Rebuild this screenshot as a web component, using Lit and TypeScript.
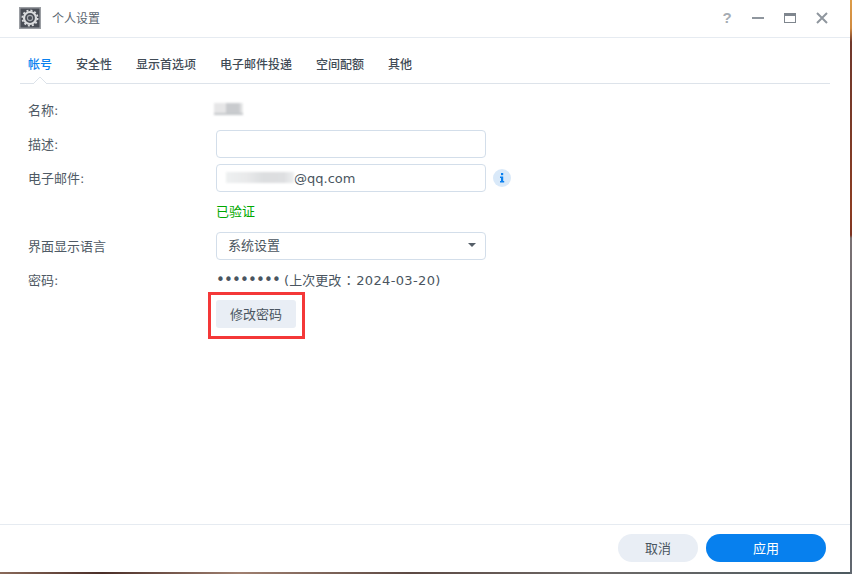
import { LitElement, html, css } from "lit";
import { customElement } from "lit/decorators.js";

@customElement("app-root")
export class AppRoot extends LitElement {
  static styles = css`
    :host {
      display: block;
      width: 852px;
      height: 574px;
      font-family: "DejaVu Sans", "Noto Sans CJK SC", sans-serif;
      font-size: 13px;
      color: #4a5560;
    }
    .desk {
      width: 852px;
      height: 574px;
      box-sizing: border-box;
      padding: 0 2px 2px 0;
      background:
        linear-gradient(180deg, #dd9c48 0, #d08a40 28px, #70382c 42px, #7a3a28 120px, #8c3c22 210px, #7d3422 235px, #7b7274 238px, #6a6a70 330px, #565d66 470px, #626870 574px) right top / 2px 574px no-repeat,
        linear-gradient(90deg, #8a6a5a, #4a2e28 12%, #a08070 28%, #5d4a44 48%, #6e6a68 70%, #4c5a60 100%) left bottom / 852px 2px no-repeat;
      overflow: hidden;
    }
    .win {
      height: 572px;
      background: #fff;
      display: flex;
      flex-direction: column;
      border-bottom-right-radius: 2px;
    }
    .head {
      height: 36px;
      border-bottom: 1px solid #e6ebf1;
      display: flex;
      align-items: center;
      padding: 0 20px 1px 19px;
      flex: none;
    }
    .app {
      width: 22px;
      height: 22px;
      display: block;
      flex: none;
    }
    .title {
      margin: 0 0 2px 11px;
      font-size: 12px;
      color: #5a6570;
      flex: 1;
    }
    .ctl {
      display: flex;
      align-items: center;
      gap: 16px;
    }
    .ctl svg {
      display: block;
      width: 16px;
      height: 16px;
    }
    .tabs {
      margin: 0 20px;
      height: 46px;
      box-sizing: border-box;
      border-bottom: 1px solid #dde3ea;
      display: flex;
      align-items: center;
      gap: 24px;
      padding: 6px 8px 1px;
      position: relative;
      font-size: 12px;
      font-weight: 500;
      color: #414b55;
      flex: none;
    }
    .tab.on {
      color: #0a80ef;
    }
    .notch {
      position: absolute;
      left: 13px;
      bottom: -1px;
      width: 14px;
      height: 8px;
      display: block;
    }
    .body {
      flex: 1;
      padding: 9px 28px 0;
    }
    .row {
      height: 34px;
      display: grid;
      grid-template-columns: 188px 1fr;
      align-items: center;
    }
    .lab {
      font-size: 13px;
      color: #4f5a65;
      padding-bottom: 2px;
    }
    .val {
      display: flex;
      align-items: center;
      gap: 7px;
      min-width: 0;
    }
    .input {
      width: 270px;
      height: 28px;
      box-sizing: border-box;
      border: 1px solid #d3deea;
      border-radius: 4px;
      background: #fff;
      display: flex;
      align-items: center;
      padding: 0 9px;
      position: relative;
    }
    .blur {
      filter: blur(1px);
    }
    .blur.email {
      width: 68px;
      height: 11px;
      margin-top: -1px;
      background: linear-gradient(90deg, #eef0f1, #e9eaeb 30%, #dcdee0 55%, #dedfe1 85%, #eef0f1);
    }
    .blur.name {
      width: 29px;
      height: 10px;
      margin: -4px 0 0 -2px;
      background: linear-gradient(90deg, #e6e6e7 0 42%, #c9cbce 42% 85%, #f0f0f0);
      box-shadow: 0 2px 0 #c4c7ca;
    }
    .info {
      width: 18px;
      height: 18px;
      display: block;
    }
    .ok {
      color: #00a800;
      font-size: 13px;
      padding-bottom: 3px;
    }
    .caret {
      position: absolute;
      right: 9px;
      top: 10px;
      width: 0;
      height: 0;
      border-left: 4.5px solid transparent;
      border-right: 4.5px solid transparent;
      border-top: 4.5px solid #555e68;
    }
    .sel {
      padding: 0 0 4px 11px;
      font-size: 13px;
    }
    .pw {
      padding-bottom: 1px;
    }
    .dots {
      font-size: 15px;
      line-height: 1;
      letter-spacing: -0.85px;
    }
    .date {
      letter-spacing: 0.35px;
    }
    .colon {
      font-family: "Noto Sans CJK TC", sans-serif;
      padding: 0 1px;
    }
    .btn {
      border: 0;
      padding: 0 0 2px;
      font: inherit;
      height: 28px;
      box-sizing: border-box;
      background: #e9eef5;
      color: #4a5560;
      display: flex;
      align-items: center;
      justify-content: center;
      font-size: 13px;
    }
    .change {
      width: 80px;
      border-radius: 3px;
      position: relative;
    }
    .change::after {
      content: "";
      position: absolute;
      left: -8px;
      top: -8px;
      width: 97px;
      height: 47px;
      box-sizing: border-box;
      border: 3px solid #f43838;
    }
    .foot {
      height: 48px;
      box-sizing: border-box;
      border-top: 1px solid #e6ebf1;
      display: flex;
      justify-content: flex-end;
      align-items: center;
      gap: 8px;
      padding: 0 24px 1px 0;
      flex: none;
    }
    .pill {
      border-radius: 14px;
    }
    .cancel {
      width: 80px;
    }
    .apply {
      width: 120px;
      background: #0780ee;
      color: #fff;
    }
  `;

  render() {
    return html`
      <div class="desk">
        <div class="win">
          <div class="head">
            <svg class="app" viewBox="0 0 22 22">
              <rect x="0" y="0" width="22" height="22" fill="#9a9da2" />
              <rect x="1.5" y="1.5" width="19" height="19" fill="#4a4e56" />
              <g fill="none" stroke="#dcdddf">
                <circle cx="11" cy="11" r="6" stroke-width="2.2" />
                <circle cx="11" cy="11" r="7.6" stroke-width="1.8" stroke-dasharray="2 2" />
                <circle cx="11" cy="11" r="2.6" stroke-width="1.1" stroke="#a8abb0" />
              </g>
            </svg>
            <div class="title">个人设置</div>
            <div class="ctl">
              <svg viewBox="0 0 16 16"><text x="4.5" y="13" font-size="15" font-weight="700" font-family="Liberation Sans" fill="#a6acb3">?</text></svg>
              <svg viewBox="0 0 16 16"><rect x="2" y="7" width="12" height="2" fill="#8f969e" /></svg>
              <svg viewBox="0 0 16 16"><rect x="2.5" y="3.5" width="11" height="9" fill="none" stroke="#7f868e" /><rect x="2" y="3" width="12" height="3" fill="#7f868e" /></svg>
              <svg viewBox="0 0 16 16"><path d="M3 3l10 10M13 3L3 13" stroke="#8f969e" stroke-width="2" fill="none" /></svg>
            </div>
          </div>
          <div class="tabs">
            <div class="tab on">帐号</div>
            <div class="tab">安全性</div>
            <div class="tab">显示首选项</div>
            <div class="tab">电子邮件投递</div>
            <div class="tab">空间配额</div>
            <div class="tab">其他</div>
            <svg class="notch" viewBox="0 0 14 8"><path d="M0 8L7 1l7 7" fill="#fff" stroke="#dde3ea" /></svg>
          </div>
          <div class="body">
            <div class="row">
              <div class="lab">名称:</div>
              <div class="val"><div class="blur name"></div></div>
            </div>
            <div class="row">
              <div class="lab">描述:</div>
              <div class="val"><div class="input"></div></div>
            </div>
            <div class="row">
              <div class="lab">电子邮件:</div>
              <div class="val">
                <div class="input"><div class="blur email"></div><span>@qq.com</span></div>
                <svg class="info" viewBox="0 0 18 18">
                  <circle cx="9" cy="9" r="9" fill="#d9e9f9" />
                  <rect x="8" y="4" width="2.2" height="2.2" fill="#0a80ef" />
                  <path d="M7 7.5h3.2v4.6h1v1.4H7v-1.4h1V9H7z" fill="#0a80ef" />
                </svg>
              </div>
            </div>
            <div class="row">
              <div></div>
              <div class="val"><div class="ok">已验证</div></div>
            </div>
            <div class="row">
              <div class="lab">界面显示语言</div>
              <div class="val"><div class="input sel">系统设置<div class="caret"></div></div></div>
            </div>
            <div class="row">
              <div class="lab">密码:</div>
              <div class="val pw"><span><span class="dots">••••••••</span> (上次更改<span class="colon">：</span><span class="date">2024-03-20)</span></span></div>
            </div>
            <div class="row">
              <div></div>
              <div class="val"><button class="btn change">修改密码</button></div>
            </div>
          </div>
          <div class="foot">
            <button class="btn pill cancel">取消</button>
            <button class="btn pill apply">应用</button>
          </div>
        </div>
      </div>
    `;
  }
}
